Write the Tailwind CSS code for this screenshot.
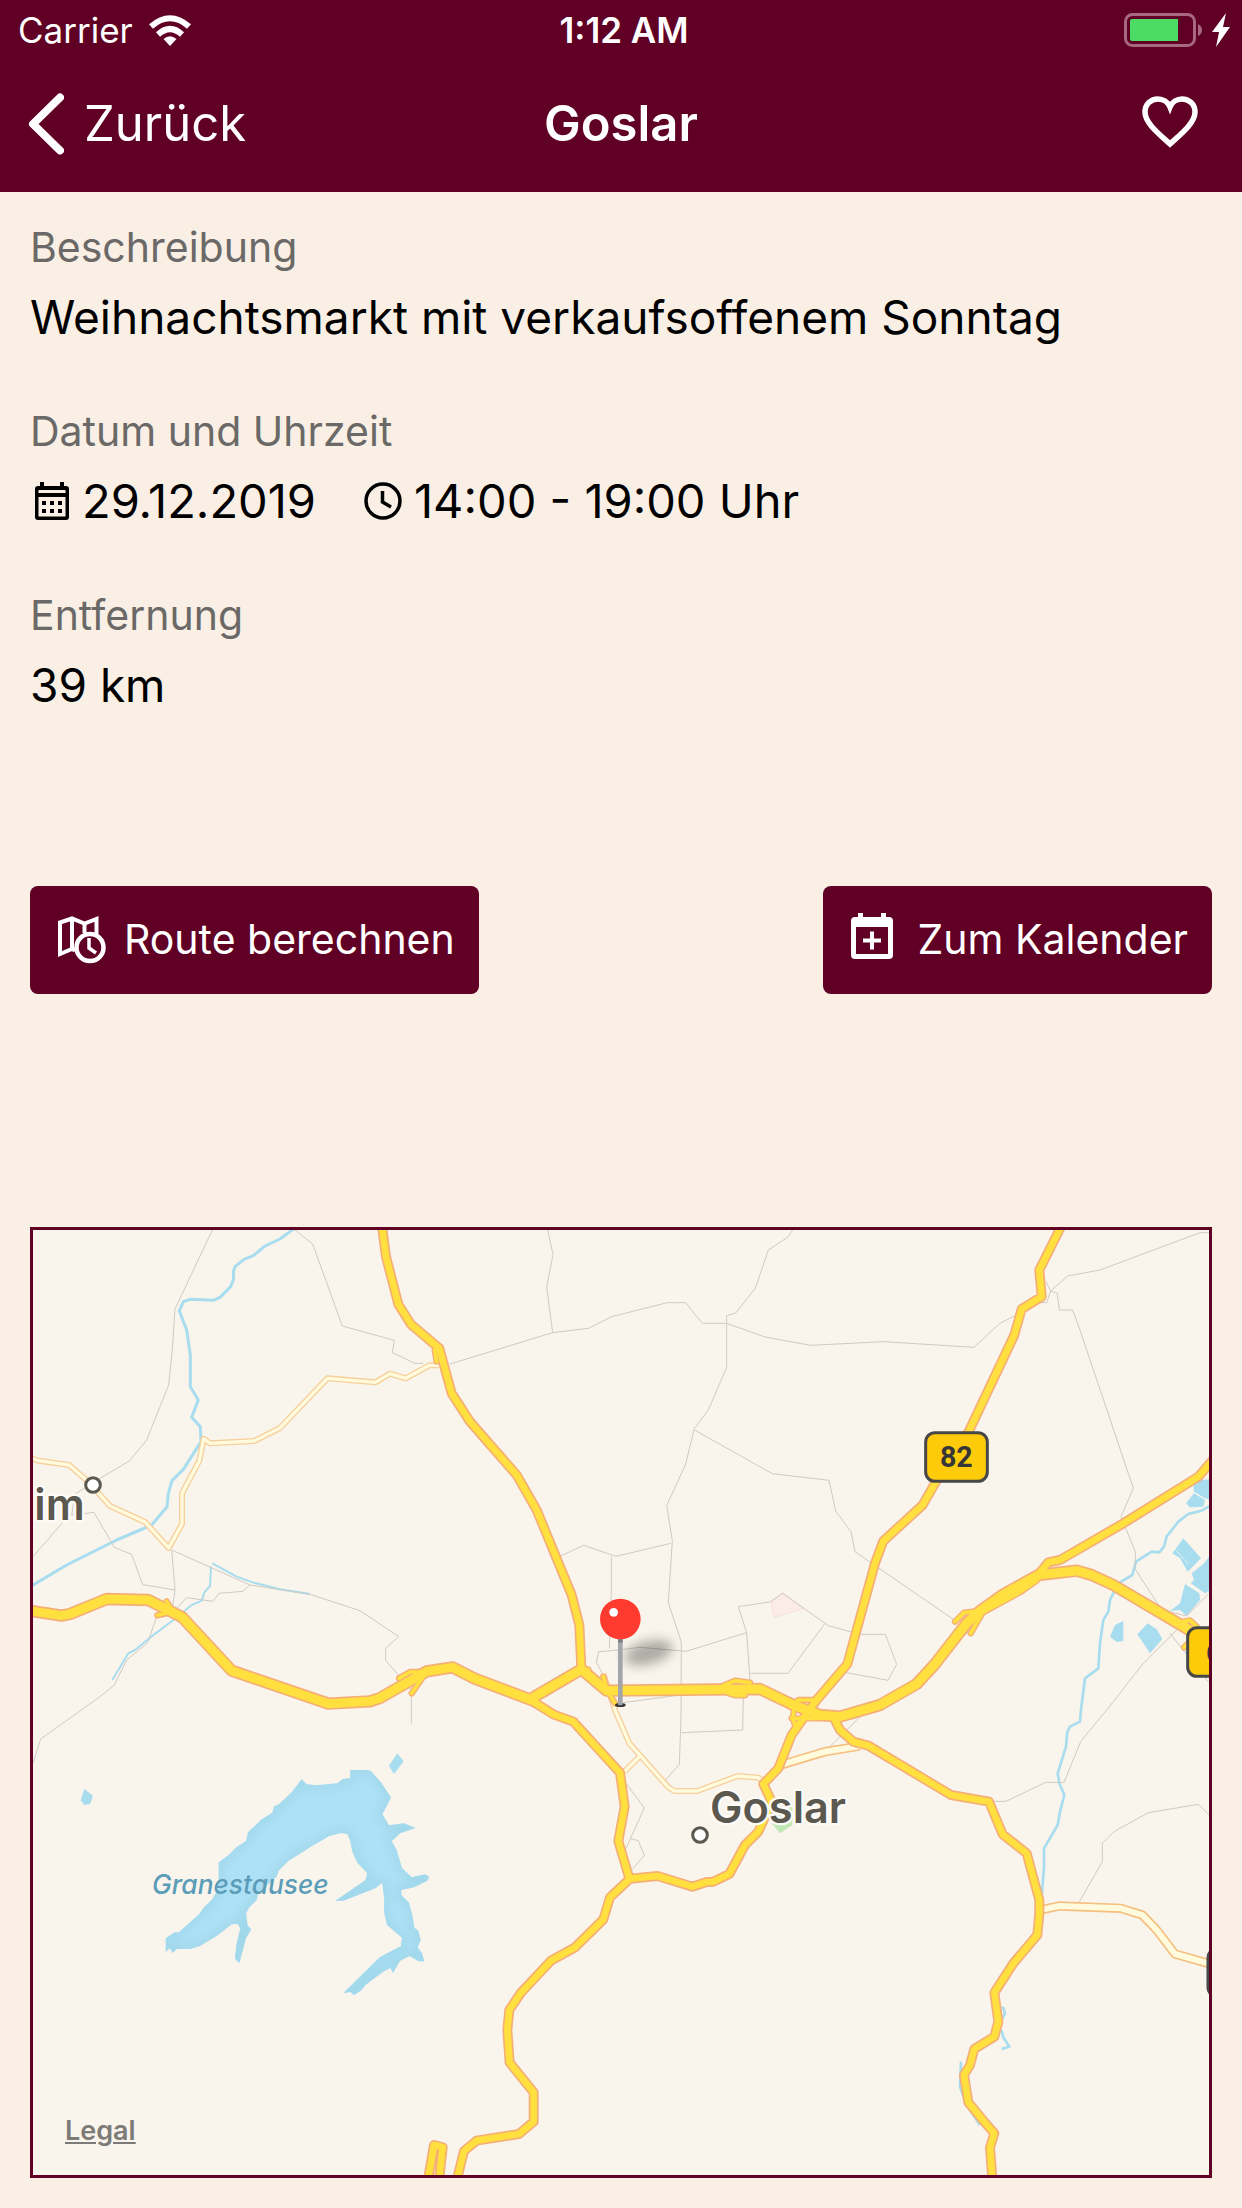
<!DOCTYPE html>
<html lang="de">
<head>
  <meta charset="UTF-8">
  <meta name="viewport" content="width=device-width, initial-scale=1.0">
  <title>Goslar</title>
  <script src="https://cdn.jsdelivr.net/npm/@tailwindcss/browser@4"></script>
</head>
<body class="min-h-screen bg-[#faefe4] font-['Inter','Liberation_Sans',sans-serif] text-black">
  <header class="bg-[#5f0024] text-white">
    <!-- Statusleiste -->
    <div class="grid h-16 grid-cols-[1fr_auto_1fr] items-center pb-1 pl-[18px] pr-3">
      <div class="flex items-center gap-4 text-[35px]">
        <span>Carrier</span>
        <svg class="h-[31px] w-[42px]" viewBox="0 0 42 31" fill="none" stroke="currentColor" stroke-width="6">
          <path d="M2 11.500Q21 -5 40 11.500"/>
          <path d="M9 19.500Q21 8.500 33 19.500"/>
          <path d="M21 31L14.500 24Q21 18.500 27.500 24Z" fill="currentColor" stroke="none"/>
        </svg>
      </div>
      <span class="text-[35px] font-semibold">1:12 AM</span>
      <div class="flex items-center justify-end gap-2">
        <svg class="h-[34px] w-[80px]" viewBox="0 0 80 34">
          <rect x="1.500" y="1.500" width="69" height="31" rx="7" fill="none" stroke="#a8687f" stroke-width="3"/>
          <path d="M8 6h46v22H8a2 2 0 0 1-2-2V8a2 2 0 0 1 2-2Z" fill="#4cdc66"/>
          <path d="M74 11q4 2 4 6t-4 6Z" fill="#a8687f"/>
        </svg>
        <svg class="h-[34px] w-[18px]" viewBox="0 0 18 34" fill="currentColor"><path d="M14 0L0 19h7L4 34L18 14h-7Z"/></svg>
      </div>
    </div>
    <!-- Navigation -->
    <nav class="grid h-32 grid-cols-[1fr_auto_1fr] items-center px-7 pb-2">
      <a href="#" class="flex items-center gap-5 text-[49px]">
        <svg class="h-[62px] w-[36px]" viewBox="0 0 36 62" fill="none" stroke="currentColor" stroke-width="8" stroke-linecap="round" stroke-linejoin="round"><path d="M32 4.500L5 31L32 57.500"/></svg>
        Zurück
      </a>
      <h1 class="text-[49px] font-semibold">Goslar</h1>
      <button type="button" aria-label="Merken" class="mr-4 mb-1 justify-self-end">
        <svg class="h-[52px] w-[56px]" viewBox="0 0 56 52" fill="none" stroke="currentColor" stroke-width="5.500"><path d="M28 48C17 38 3 27 3 16C3 8 9 3 16 3C21 3 26 6 28 11C30 6 35 3 40 3C47 3 53 8 53 16C53 27 39 38 28 48Z"/></svg>
      </button>
    </nav>
  </header>

  <main class="px-[30px] pt-[25px] pb-[30px]">
    <dl class="flex flex-col gap-11">
      <div>
        <dt class="text-[41px] leading-[60px] text-[#6b6967]">Beschreibung</dt>
        <dd class="text-[46px] leading-[80px]">Weihnachtsmarkt mit verkaufsoffenem Sonntag</dd>
      </div>
      <div>
        <dt class="text-[41px] leading-[60px] text-[#6b6967]">Datum und Uhrzeit</dt>
        <dd class="flex gap-12 text-[47px] leading-[80px]">
          <span class="flex items-center gap-3 pl-1">
            <svg class="h-[40px] w-[36px]" viewBox="0 0 36 40">
              <path d="M4 5H32a3 3 0 0 1 3 3V36a3 3 0 0 1-3 3H4a3 3 0 0 1-3-3V8a3 3 0 0 1 3-3ZM4.500 9V12H31.500V9ZM4.500 16V35.500H31.500V16Z" fill-rule="evenodd"/>
              <path d="M6 1h4v6H6ZM26 1h4v6h-4ZM8 20h4v4H8ZM16 20h4v4h-4ZM24 20h4v4h-4ZM8 28h4v4H8ZM16 28h4v4h-4ZM24 28h4v4h-4Z"/>
            </svg>
            29.12.2019
          </span>
          <span class="flex items-center gap-3">
            <svg class="h-[38px] w-[38px]" viewBox="0 0 38 38" fill="none" stroke="currentColor" stroke-width="3.500"><circle cx="19" cy="19" r="17"/><path d="M18.500 9V20L27 25"/></svg>
            14:00 - 19:00 Uhr
          </span>
        </dd>
      </div>
      <div>
        <dt class="text-[41px] leading-[60px] text-[#6b6967]">Entfernung</dt>
        <dd class="text-[46px] leading-[80px]">39 km</dd>
      </div>
    </dl>

    <div class="mt-[161px] flex justify-between">
      <button type="button" class="flex h-[108px] items-center gap-[18px] rounded-lg bg-[#5f0024] pl-7 pr-6 text-[41px] text-white">
        <svg class="h-[48px] w-[48px]" viewBox="0 0 48 48" fill="none" stroke="currentColor" stroke-width="4">
          <path d="M38.500 18V3L26.500 7.500L14 2.500L2 6.500V38L14 33L17 34.500M14 3V34M26.500 7V17"/>
          <circle cx="32" cy="31.500" r="13.500" stroke-width="4.500"/>
          <path d="M31 22V32L38 37" stroke-width="3.500"/>
        </svg>
        Route berechnen
      </button>
      <button type="button" class="flex h-[108px] items-center gap-6 rounded-lg bg-[#5f0024] pl-7 pr-6 text-[41px] text-white">
        <svg class="mb-2 h-[46px] w-[42px]" viewBox="0 0 42 46" fill="currentColor">
          <path d="M4 4H7V0h5v4H30V0h5v4h3a4 4 0 0 1 4 4V42a4 4 0 0 1-4 4H4a4 4 0 0 1-4-4V8a4 4 0 0 1 4-4ZM5 14V41H37V14Z" fill-rule="evenodd"/>
          <path d="M19 18.500h4v7h7v4h-7v7h-4v-7h-7v-4h7Z"/>
        </svg>
        Zum Kalender
      </button>
    </div>

    <!-- Karte -->
    <section aria-label="Karte" class="relative mt-[233px] border-3 border-[#5f0024] bg-[#f9f5ec]">
      <svg class="block h-auto w-full" viewBox="39 60 3528 2835">
        <defs>
          <filter id="soft" x="-50%" y="-50%" width="200%" height="200%"><feGaussianBlur stdDeviation="18"/></filter>
          <path id="lake" d="M845 238L860 253L890 256L952 250L968 237L991 234V210H1045L1055 215L1085 250L1113 293L1087 343L1107 376L1152 370L1187 384L1140 400L1115 424L1130 450L1146 504L1175 532L1215 523L1228 530L1222 542L1182 562L1144 570V585L1167 608L1177 645L1183 683L1195 692L1202 720L1193 742L1206 760L1213 784H1196L1168 768L1140 783L1119 819L1112 804L1094 812L1036 855L1025 870L1001 886L992 876L970 879L1080 771L1143 738L1146 713L1101 675L1092 635L1093 600L1087 548L1066 565L970 602L945 603L1036 541L1042 520L1012 488L997 455L990 420L982 402L963 399L928 408L880 436L805 483L776 512L770 530L715 580L710 600L688 622L678 640L683 677L694 688L678 715L658 790L645 776L649 735L661 685L653 671L635 673L590 708L540 738L510 747H470L458 759L449 744L437 757V715L466 696L475 698L538 642L550 624L577 597L596 565V487L625 466L650 441L678 423L684 397L725 358L757 338L762 319L775 314L815 277Z"/>
          <clipPath id="shore"><use href="#lake"/></clipPath>
          <!-- Bundesstraßen, breit -->
          <path id="wide" d="M0 1198L125 1217L150 1212L260 1167L385 1170L487 1222L635 1382L925 1481L1050 1474L1080 1464L1220 1384L1297 1372L1365 1406L1540 1472M1540 1462L1684 1378L1760 1442L2220 1437L2320 1485L2400 1515L2460 1520L2580 1485L2690 1422L2745 1362L2840 1240L2880 1203L2950 1153L3055 1095L3170 1082L3215 1095L3280 1125L3500 1255L3560 1300"/>
          <!-- Bundesstraßen, schmal -->
          <path id="main" d="M1085 40L1098 140L1135 283L1173 343L1258 415L1295 550L1350 635L1490 795L1550 900L1655 1155L1678 1245L1684 1375M1540 1475L1600 1513L1660 1535L1800 1688L1814 1790L1795 1893L1828 2005M3128 40L3058 180L3065 260L3005 297L2983 375L2847 663L2745 820L2708 885L2590 993L2565 1060L2482 1362L2390 1470L2350 1525L2315 1575L2275 1675L2230 1722L2255 1775L2245 1800L2215 1865L2175 1905L2128 1992L2078 2016H2060L2017 2030L1913 1998L1830 2006L1770 2062L1750 2128L1665 2212L1593 2252L1503 2348L1468 2400L1462 2460L1469 2558L1541 2647V2735L1497 2772L1370 2792L1332 2823L1308 2920M1222 2920L1242 2805L1268 2812L1256 2920M2445 1530L2460 1560L2500 1595L2545 1607L2793 1755L2907 1775L2948 1873L3020 1930L3058 2070V2110L3052 2175L2980 2260L2923 2348L2935 2435L2923 2480L2863 2517L2850 2565L2832 2595L2845 2677L2890 2732L2923 2770L2910 2813L2918 2920M3062 1085L3085 1057L3120 1050L3310 940L3535 800L3600 725"/>
          <!-- Auffahrten -->
          <path id="ramp" d="M2805 1235L2832 1208L2880 1203M2852 1270L2888 1208L3000 1147L3050 1112L3072 1080M1137 1405L1170 1386H1225M1175 1450L1208 1402M412 1216L450 1207M440 1174L462 1210M1244 420L1250 455M2110 1427L2145 1412L2190 1418M2125 1450L2145 1456H2175M1484 1450L1535 1462L1546 1485M1750 1400L1762 1442L1785 1480M2310 1490L2335 1470H2388L2375 1500M2322 1500L2318 1525L2330 1560M3490 1235L3510 1231L3530 1250M3492 1312L3505 1300M1684 1360L1680 1382L1705 1378M2315 1525H2400"/>
          <path id="minor" d="M20 740L55 752L147 765L205 815L270 888L375 936L446 1014L486 942V850L538 752L551 686L570 700L702 693L780 654L922 505L1066 517L1110 491L1157 505L1228 466H1255M1750 1390L1785 1500L1828 1600L1945 1732L1963 1743H2032L2153 1698L2215 1703L2232 1715M1860 1638L1812 1686"/>
          <path id="minor-wide" d="M2285 1664L2415 1625L2520 1608M3066 2099L3118 2088L3303 2095L3367 2115L3410 2160L3465 2232L3600 2270"/>
        </defs>

        <!-- Flächen -->
        <path fill="#fbece8" stroke="#f9dfd9" stroke-width="3" d="M2253 1175L2288 1148L2352 1195L2263 1222Z"/>
        <path fill="#c1e8b4" d="M2250 1790L2302 1760L2317 1790V1845L2280 1870L2255 1840Z"/>

        <!-- Gewässer -->
        <g fill="#a8dcef">
          <path d="M3520 830L3535 810L3580 808V872L3555 865L3522 845ZM3522 850L3555 870L3550 890L3510 892L3498 880ZM3490 985L3543 1045L3503 1085L3480 1045L3457 1030ZM3580 1025L3550 1062L3515 1090L3522 1110L3512 1120L3555 1150L3580 1135ZM3495 1122L3538 1150L3540 1170L3500 1217L3480 1200L3450 1203L3480 1180ZM3310 1233V1293L3290 1296L3270 1280L3285 1245ZM3383 1240L3410 1258L3427 1287L3390 1330L3352 1273Z"/>
          <path d="M193 1737L219 1757L211 1781L193 1785L182 1771ZM1132 1630L1151 1654L1122 1692L1107 1667Z"/>
        </g>
        <path d="M3460 1012L3505 1062" stroke="#f9f5ec" stroke-width="2"/>
        <g fill="none" stroke="#a8dcef" stroke-linejoin="round">
          <path stroke-width="9" d="M830 50L780 87L735 108L700 137L672 148L645 170L640 185L641 207L632 230L600 262L580 271L510 268L490 275L478 303L500 360L511 435V530L535 570L515 622L541 650L543 695L490 778L456 812L445 850L441 890L395 945L290 990L140 1065L30 1130"/>
          <path stroke-width="6" d="M577 1060L650 1100L700 1118L780 1138L870 1152M573 1070L570 1128L553 1147L545 1172L515 1185L460 1230L390 1283L345 1320L325 1330L277 1410"/>
          <path stroke-width="8" d="M3580 882L3545 902L3505 912L3475 935L3440 980L3432 1010L3418 1027L3395 1025L3348 1055L3337 1095L3295 1120L3270 1170L3265 1205L3250 1230L3240 1300L3235 1375L3195 1405L3183 1500L3180 1535L3150 1550L3142 1565L3138 1610L3113 1690L3118 1720L3133 1755L3120 1805L3113 1845L3072 1915V1970L3065 2060M2948 2390L2955 2410L2945 2430M2944 2460L2950 2482L2968 2510L2945 2517M2823 2555L2820 2630L2830 2660M2850 2700L2880 2745"/>
        </g>
        <g transform="translate(0 1470)">
          <use href="#lake" fill="#aee1f6"/>
          <g clip-path="url(#shore)"><use href="#lake" fill="none" stroke="#9fd6e8" stroke-width="24" filter="url(#soft)"/></g>
        </g>

        <!-- Nebenstraßen -->
        <path fill="none" stroke="#cfcbc4" stroke-width="3" d="M577 60L465 297L456 430L446 525L380 690L328 753L240 805L165 852L155 915L222 907L283 1012L335 1033L368 1124L465 1140L455 1020L690 1125L870 1153L1020 1202L1136 1280L1097 1315V1352L1140 1400L1174 1440V1540M150 912L39 1040M690 1125L668 1144L597 1150L578 1174L500 1163L470 1195M465 1140L458 1190L410 1220L383 1298L320 1350L283 1425L240 1460L62 1587L39 1660M825 60L878 102L967 348L1123 391L1117 428L1185 460H1210M1290 462L1598 368L1705 355L1775 320L1942 278H1997L2047 340H2120L2235 381L2372 406L2590 395L2862 412L2940 340L2985 317M1583 60L1599 133L1580 232L1598 368M2318 60L2304 81L2245 120L2206 235L2147 309L2120 317V472L2065 600L2023 655L1997 762L1940 887L1957 992L1945 1178L1984 1297L1983 1520L1978 1663L1937 1710M2023 660L2257 791L2427 811L2447 903L2493 965L2505 1025L2570 1070L2800 1228M1622 1038L1691 1006L1788 1039L1952 1000M1774 1039V1140L1768 1315M1775 1322L1736 1325L1729 1357L1750 1395M1775 1322L1860 1312L1998 1324L2180 1268L2155 1190L2250 1176L2288 1150L2425 1247L2520 1273H2596L2630 1363L2604 1411L2480 1388M2180 1268L2192 1440M2192 1390H2304L2415 1240M2170 1455L2168 1560L1985 1568M1810 1478L1980 1455M3078 215L3092 243L3143 198L3240 180L3540 68H3567M3060 278H3080L3092 243L3112 250L3118 300H3158L3180 360L3340 835L3303 920L3346 1025V1078L3425 1200L3500 1218L3567 1150M3500 1230L3370 1360L3260 1500L3182 1595L3132 1717H3077L2958 1774H2915M3450 1270L3567 1418M3178 2075L3247 1955V1900L3282 1865L3385 1808L3535 1783L3567 1815M2430 1610L2520 1520M2805 1305L2850 1260M1818 1720L1873 1794L1818 1915M1832 1886L1855 1892L1873 1937L1830 1985"/>

        <!-- Straßen -->
        <g fill="none" stroke-linejoin="round">
          <use href="#minor" stroke="#f6cf9c" stroke-width="18"/>
          <use href="#minor" stroke="#fffbdc" stroke-width="10"/>
          <use href="#minor-wide" stroke="#f5bf80" stroke-width="28"/>
          <use href="#minor-wide" stroke="#fffbdc" stroke-width="18"/>
          <g stroke="#f5ae78" stroke-linecap="round">
            <use href="#ramp" stroke-width="19"/>
            <use href="#main" stroke-width="30"/>
            <use href="#wide" stroke-width="37"/>
          </g>
          <g stroke="#ffe03e" stroke-linecap="round">
            <use href="#ramp" stroke-width="11"/>
            <use href="#main" stroke-width="20"/>
            <use href="#wide" stroke-width="27"/>
          </g>
        </g>

        <!-- Straßenschilder -->
        <g fill="#fecb0b" stroke="#474747" stroke-width="9">
          <rect x="2717" y="668" width="185" height="146" rx="28"/>
          <rect x="3503" y="1253" width="185" height="146" rx="28"/>
          <rect x="3564" y="2215" width="185" height="146" rx="28"/>
        </g>
        <g fill="#363636" font-family="Roboto, sans-serif" font-weight="700" font-size="86">
          <text x="2809" y="770" text-anchor="middle">82</text>
          <text x="3558" y="1356">6</text>
        </g>

        <!-- Orte -->
        <g fill="#fff" stroke="#5b584f" stroke-width="9">
          <circle cx="219" cy="825" r="22"/>
          <circle cx="2040" cy="1875" r="22"/>
        </g>
        <g fill="#5b584f" stroke="#fdfbf7" stroke-width="14" stroke-linejoin="round" paint-order="stroke" font-weight="600" font-size="130">
          <text x="194" y="930" text-anchor="end">im</text>
          <text x="2070" y="1840">Goslar</text>
        </g>
        <text x="396" y="2052" fill="#5b9cb8" font-style="italic" font-weight="500" font-size="79">Granestausee</text>

        <!-- Stecknadel -->
        <ellipse cx="1885" cy="1328" rx="75" ry="34" fill="#000" opacity=".3" filter="url(#soft)" transform="rotate(-15 1885 1328)"/>
        <ellipse cx="1801" cy="1485" rx="16" ry="6" fill="#333"/>
        <rect x="1794" y="1280" width="14" height="206" rx="4" fill="#a3a5aa"/>
        <rect x="1794" y="1280" width="14" height="18" fill="#808187"/>
        <circle cx="1801" cy="1227" r="61" fill="#ff3b2f"/>
        <circle cx="1781" cy="1207" r="13" fill="#fff"/>
      </svg>
      <a href="#" class="absolute bottom-6 left-8 text-[27px] font-semibold text-[#7d7b77] underline decoration-2 underline-offset-2">Legal</a>
    </section>
  </main>
</body>
</html>
